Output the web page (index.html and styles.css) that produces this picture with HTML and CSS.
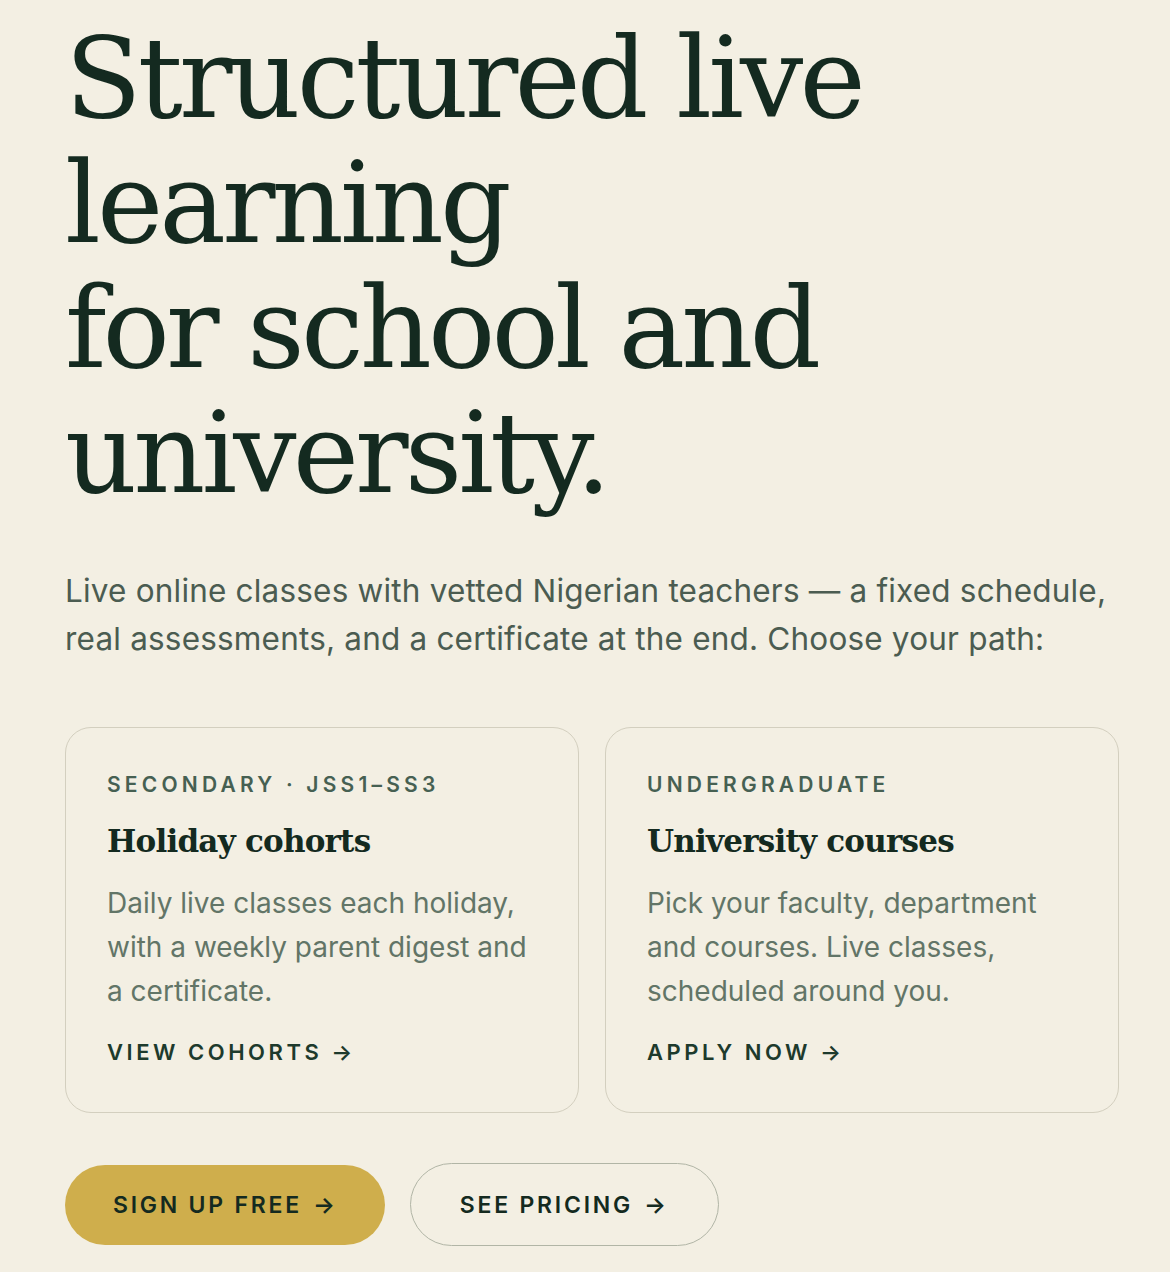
FILE: index.html
```html
<!DOCTYPE html>
<html lang="en">
<head>
<meta charset="utf-8">
<title>Structured live learning</title>
<link rel="stylesheet" href="styles.css">
</head>
<body>
<main class="hero">
  <h1 class="hero-title">Structured live learning<br>for school and university.</h1>
  <p class="hero-lead">Live online classes with vetted Nigerian teachers — a fixed schedule, real assessments, and a certificate at the end. Choose your path:</p>
  <div class="paths">
    <a class="path-card" href="#">
      <div class="path-label">Secondary · JSS1–SS3</div>
      <h2 class="path-title">Holiday cohorts</h2>
      <p class="path-desc">Daily live classes each holiday, with a weekly parent digest and a certificate.</p>
      <div class="path-link">View cohorts <span class="arrow">→</span></div>
    </a>
    <a class="path-card" href="#">
      <div class="path-label">Undergraduate</div>
      <h2 class="path-title">University courses</h2>
      <p class="path-desc">Pick your faculty, department and courses. Live classes, scheduled around you.</p>
      <div class="path-link">Apply now <span class="arrow">→</span></div>
    </a>
  </div>
  <div class="actions">
    <a class="btn btn-primary" href="#"><span>Sign up free</span><span class="arrow">→</span></a>
    <a class="btn btn-outline" href="#"><span>See pricing</span><span class="arrow">→</span></a>
  </div>
</main>
</body>
</html>
```

FILE: styles.css
```css
html, body {
  margin: 0;
  padding: 0;
  background: #f3efe3;
}
body {
  font-family: Inter, "Noto Sans", sans-serif;
  color: #142a20;
}
.hero {
  padding: 16px 51px 0 65px;
  max-width: 1054px;
}
.hero-title {
  font-family: "DejaVu Serif", serif;
  font-weight: 400;
  font-size: 112px;
  line-height: 125px;
  letter-spacing: -0.035em;
  margin: 0;
  color: #142a20;
}
.hero-lead {
  font-size: 31.5px;
  line-height: 48px;
  letter-spacing: 0.006em;
  color: #4b5c51;
  margin: 51px 0 0;
}
.paths {
  display: grid;
  grid-template-columns: 1fr 1fr;
  gap: 26px;
  margin-top: 64px;
}
.path-card {
  display: block;
  text-decoration: none;
  border: 1.5px solid #d3cfbf;
  border-radius: 26px;
  padding: 43px 40px 45px 41px;
  color: inherit;
}
.path-label {
  font-size: 21px;
  font-weight: 600;
  letter-spacing: 0.2em;
  text-transform: uppercase;
  color: #466052;
  line-height: 28px;
}
.path-title {
  font-family: "DejaVu Serif", serif;
  font-weight: 700;
  font-size: 31px;
  line-height: 44px;
  letter-spacing: -0.025em;
  margin: 20px 0 0;
  color: #142a20;
}
.path-desc {
  font-size: 28px;
  line-height: 44px;
  color: #627567;
  margin: 18px 0 0;
}
.path-link {
  font-size: 22px;
  font-weight: 600;
  letter-spacing: 0.16em;
  text-transform: uppercase;
  color: #1d3a2c;
  margin-top: 24px;
  line-height: 30px;
}
.actions {
  display: flex;
  gap: 25px;
  margin-top: 50px;
  align-items: center;
}
.btn {
  display: inline-flex;
  align-items: center;
  justify-content: center;
  gap: 11px;
  height: 80px;
  border-radius: 42px;
  font-size: 23px;
  font-weight: 600;
  letter-spacing: 0.12em;
  text-transform: uppercase;
  text-decoration: none;
  color: #142a20;
  box-sizing: border-box;
}
.btn-primary {
  background: #cfae4c;
  padding: 0 50px 0 48px;
}
.btn-outline {
  border: 1.5px solid #b1b5a6;
  padding: 0 52px 0 49px;
  height: 83px;
}
.arrow {
  letter-spacing: 0;
}
```
